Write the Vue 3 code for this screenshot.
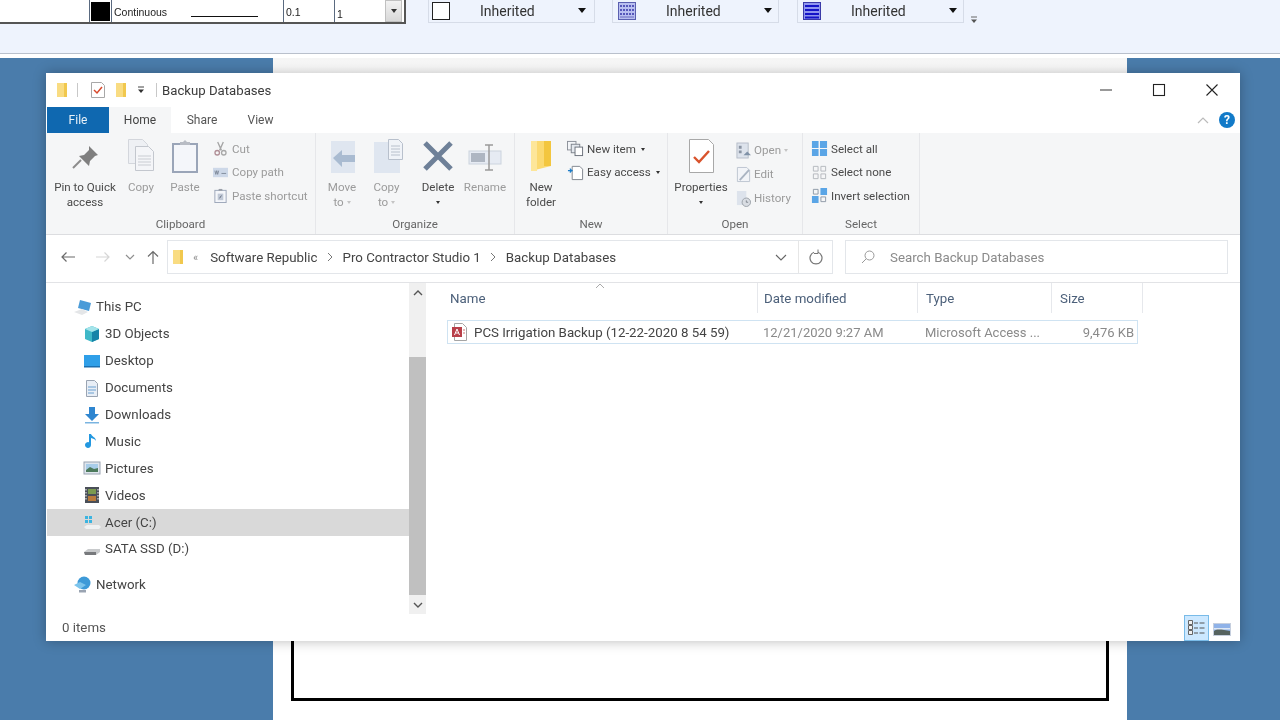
<template>
  <div class="screen">
    <header class="app-toolbar">
      <div class="line-combo">
        <div class="cell cell-blank"></div>
        <div class="cell cell-swatch"><span class="swatch"></span></div>
        <div class="cell cell-linetype"><span>Continuous</span><i class="line-sample"></i></div>
        <div class="cell cell-weight">0.1</div>
        <div class="cell cell-scale">
          <span>1</span>
          <button class="combo-drop"><i class="tri"></i></button>
        </div>
      </div>
      <div class="inherit-box first">
        <span class="inherit-blank"></span>
        <span class="inherit-label">Inherited</span>
        <i class="tri big"></i>
      </div>
      <div class="inherit-box">
        <svg class="inherit-icon" viewBox="0 0 18 18">
          <rect x=".5" y=".5" width="17" height="17" fill="#b9bff0" stroke="#5a5fb0" />
          <path d="M2 4h14M2 8h14M2 12h14" stroke="#3636a8" stroke-width="1.6" stroke-dasharray="2 1" />
          <path d="M2 15h14" stroke="#6a6ac0" />
        </svg>
        <span class="inherit-label">Inherited</span>
        <i class="tri big"></i>
      </div>
      <div class="inherit-box third">
        <svg class="inherit-icon" viewBox="0 0 18 18">
          <rect x=".5" y=".5" width="17" height="17" fill="#8f96ee" stroke="#3a3aa8" />
          <path d="M2 4h14M2 8h14M2 12h14M2 15.5h14" stroke="#1414c8" stroke-width="2" />
        </svg>
        <span class="inherit-label">Inherited</span>
        <i class="tri big"></i>
      </div>
      <svg class="toolbar-more" viewBox="0 0 8 8"><path d="M1 1h6" stroke="#666" /><path d="M1 3.5h6L4 7z" fill="#555" /></svg>
    </header>

    <main class="desktop">
      <div class="paper">
        <div class="drawing-frame"></div>
      </div>

      <section class="explorer">
        <div class="titlebar">
          <svg class="qa-folder" viewBox="0 0 10 14"><path d="M0 0h10v14H0z" fill="#f9dc82" /><path d="M7 0h3v14H7z" fill="#f1c84e" /></svg>
          <i class="qa-sep"></i>
          <svg class="qa-check" viewBox="0 0 14 16"><path d="M.5.5h10l3 3v12H.5z" fill="#fff" stroke="#a8a8a8" /><path d="M3 8l3 3 5-6" fill="none" stroke="#d8492c" stroke-width="1.5" /></svg>
          <svg class="qa-folder two" viewBox="0 0 10 14"><path d="M0 0h10v14H0z" fill="#f9dc82" /><path d="M7 0h3v14H7z" fill="#f1c84e" /></svg>
          <svg class="qa-more" viewBox="0 0 8 8"><path d="M1 1h6" stroke="#444" /><path d="M1 3.5h6L4 7z" fill="#333" /></svg>
          <i class="qa-sep last"></i>
          <span class="window-title">Backup Databases</span>
          <div class="window-buttons">
            <svg viewBox="0 0 14 14"><path d="M1 7h12" stroke="#555" stroke-width="1.2" /></svg>
            <svg viewBox="0 0 14 14"><rect x="1.5" y="1.5" width="11" height="11" fill="none" stroke="#222" stroke-width="1.1" /></svg>
            <svg viewBox="0 0 14 14"><path d="M1.5 1.5l11 11M12.5 1.5l-11 11" stroke="#222" stroke-width="1.1" /></svg>
          </div>
        </div>

        <div class="tabs">
          <span class="tab tab-file">File</span>
          <span class="tab tab-active">Home</span>
          <span class="tab tab-share">Share</span>
          <span class="tab tab-view">View</span>
          <svg class="collapse" viewBox="0 0 12 8"><path d="M1 7l5-5 5 5" fill="none" stroke="#bbb" stroke-width="1.2" /></svg>
          <span class="help">?</span>
        </div>

        <div class="ribbon">
          <div class="group" style="width: 270px">
            <div class="group-body clip-body">
              <div class="big-btn dark" style="width: 70px">
                <svg class="big-icon" viewBox="0 0 34 34"><path d="M21 7l9 9-3 1-5 5-1 5-10-10 5-1 5-5z" fill="#7f7f7f" /><path d="M13 21l-8 8" stroke="#8c8c8c" stroke-width="2" /></svg>
                <span>Pin to Quick<br />access</span>
              </div>
              <div class="big-btn faint" style="width: 42px">
                <svg class="big-icon" viewBox="0 0 34 34"><path d="M4.500 .5h14l5 5v19h-19z" fill="#eef0f4" stroke="#d3d6dc" /><path d="M11.500 7.500h13l5 5v19h-18z" fill="#f4f5f8" stroke="#c3c7ce" /><path d="M14 17h13M14 20h13M14 23h13M14 26h13" stroke="#c9ccd2" /></svg>
                <span>Copy</span>
              </div>
              <div class="big-btn faint" style="width: 46px">
                <svg class="big-icon" viewBox="0 0 34 34"><rect x="5" y="5" width="24" height="28" fill="#f4f6fa" stroke="#9aa5b8" stroke-width="2" /><path d="M12 6V3h3l2-2 2 2h3v3z" fill="#b8bcc4" /></svg>
                <span>Paste</span>
              </div>
              <div class="small-col" style="margin-left: 5px">
                <div class="small-row faint">
                  <svg viewBox="0 0 16 16"><path d="M5 1l4 9M11 1L7 10" stroke="#a5a5a5" stroke-width="1.4" /><circle cx="4.500" cy="12.500" r="2.400" fill="none" stroke="#b08f96" stroke-width="1.400" /><circle cx="11.500" cy="12.500" r="2.400" fill="none" stroke="#a8a8a8" stroke-width="1.400" /></svg>
                  <span>Cut</span>
                </div>
                <div class="small-row faint">
                  <svg viewBox="0 0 16 16"><rect x="0" y="3" width="16" height="10" fill="#cdd8e8" /><path d="M2 6l1 4 1-4 1 4 1-4M9 9h5" fill="none" stroke="#7f8a9a" /></svg>
                  <span>Copy path</span>
                </div>
                <div class="small-row faint">
                  <svg viewBox="0 0 16 16"><rect x="2" y="2.500" width="12" height="13" fill="#f4f6fa" stroke="#9aa5b8" /><path d="M6 3V1h4v2z" fill="#9a9fa8" /><rect x="5" y="6" width="6" height="7" fill="#c0c8d6" /><path d="M7 11l2-3" stroke="#5e6a7c" /></svg>
                  <span>Paste shortcut</span>
                </div>
              </div>
            </div>
            <div class="group-label">Clipboard</div>
          </div>

          <div class="group" style="width: 199px">
            <div class="group-body org-body">
              <div class="big-btn faint" style="width: 44px">
                <svg class="big-icon" viewBox="0 0 34 34"><rect x="6" y="2" width="24" height="32" fill="#dfe6f0" /><path d="M8 19l9-8v5h13v7H17v5z" fill="#a9bbd1" /></svg>
                <span>Move<br />to <i class="mini-tri"></i></span>
              </div>
              <div class="big-btn faint" style="width: 45px">
                <svg class="big-icon" viewBox="0 0 34 34"><rect x="4" y="3" width="26" height="31" fill="#dfe6f0" /><path d="M18.500 .5h10l4 4v16h-14z" fill="#f0f3f8" stroke="#b8c0cc" /><path d="M21 7h9M21 10h9M21 13h9M21 16h9" stroke="#b8c0cc" /></svg>
                <span>Copy<br />to <i class="mini-tri"></i></span>
              </div>
              <div class="big-btn dark" style="width: 58px">
                <svg class="big-icon" viewBox="0 0 34 34"><path d="M4 4l26 26M30 4L4 30" stroke="#6e8098" stroke-width="5" /></svg>
                <span>Delete<br /><i class="mini-tri solid"></i></span>
              </div>
              <div class="big-btn faint" style="width: 36px">
                <svg class="big-icon" viewBox="0 0 34 34"><rect x="1" y="12" width="32" height="13" fill="#e6ebf3" stroke="#ccd3de" /><rect x="3" y="14" width="14" height="9" fill="#aeb6c2" /><path d="M17 6h8M21 6v25M17 31h8" stroke="#9a9a9a" stroke-width="1.500" /></svg>
                <span>Rename</span>
              </div>
            </div>
            <div class="group-label">Organize</div>
          </div>

          <div class="group" style="width: 153px">
            <div class="group-body new-body">
              <div class="big-btn dark" style="width: 50px">
                <svg class="big-icon" viewBox="0 0 34 34"><path d="M7 2h20v25l-20 5z" fill="#fbd970" /><path d="M20 2h7v25h-7z" fill="#f3c63f" /><path d="M7 2h6v30H7z" fill="#fde69a" /></svg>
                <span>New<br />folder</span>
              </div>
              <div class="small-col new-col">
                <div class="small-row dark wide">
                  <svg viewBox="0 0 18 16"><rect x=".5" y=".5" width="9" height="9" fill="#f3f5f8" stroke="#8a8f98" /><rect x="4.500" y="3.500" width="9" height="9" fill="#e4e8ee" stroke="#7d838c" /><rect x="8.500" y="6.500" width="8" height="9" fill="#fff" stroke="#6a707a" /></svg>
                  <span>New item <i class="mini-tri solid up"></i></span>
                </div>
                <div class="small-row dark wide">
                  <svg viewBox="0 0 18 16"><path d="M5.500 1.500h8l3 3v11h-11z" fill="#fff" stroke="#7d838c" /><path d="M1 6h5M3 4l2 2-2 2" fill="none" stroke="#1b7cc8" stroke-width="1.200" /></svg>
                  <span>Easy access <i class="mini-tri solid up"></i></span>
                </div>
              </div>
            </div>
            <div class="group-label">New</div>
          </div>

          <div class="group" style="width: 135px">
            <div class="group-body open-body">
              <div class="big-btn dark" style="width: 58px">
                <svg class="big-icon" viewBox="0 0 34 34"><path d="M5.500 .5h19l5 5v28h-24z" fill="#fff" stroke="#a8a8a8" /><path d="M10 18l5 5 10-11" fill="none" stroke="#d9532c" stroke-width="2.400" /></svg>
                <span>Properties<br /><i class="mini-tri solid"></i></span>
              </div>
              <div class="small-col open-col">
                <div class="small-row faint">
                  <svg viewBox="0 0 16 18"><rect x="1" y="1" width="12" height="16" fill="#dde3ec" stroke="#b5bcc7" /><path d="M3 4h3v3H3zM3 9h3v3H3z" fill="#8a94a3" /><path d="M8 14l4-4 4 4" fill="#8092a8" /></svg>
                  <span>Open <i class="mini-tri"></i></span>
                </div>
                <div class="small-row faint">
                  <svg viewBox="0 0 16 18"><path d="M1.500 1.500h10l3 3v12h-13z" fill="#f2f4f8" stroke="#bcc4d0" /><path d="M4 15L14 4" stroke="#aab4c2" stroke-width="2" /></svg>
                  <span>Edit</span>
                </div>
                <div class="small-row faint">
                  <svg viewBox="0 0 16 18"><rect x="1" y="1" width="10" height="15" fill="#dde3ec" /><circle cx="11" cy="13" r="4.500" fill="#d9dde3" stroke="#9aa0a8" /><path d="M11 11v2h2" fill="none" stroke="#80868e" /></svg>
                  <span>History</span>
                </div>
              </div>
            </div>
            <div class="group-label">Open</div>
          </div>

          <div class="group" style="width: 117px">
            <div class="group-body select-body">
              <div class="small-col">
                <div class="small-row dark wide">
                  <svg viewBox="0 0 18 16"><path d="M1 0h7v7.500H1zM9.500 0h7.500v7.500H9.500zM1 8.500h7V16H1zM9.500 8.500h7.500V16H9.500z" fill="#5aa5e6" /></svg>
                  <span>Select all</span>
                </div>
                <div class="small-row dark wide">
                  <svg viewBox="0 0 18 16"><path d="M2.500 1.500h5v5h-5zM10.500 1.500h5v5h-5zM2.500 9.500h5v5h-5zM10.500 9.500h5v5h-5z" fill="none" stroke="#b5b8bd" /></svg>
                  <span>Select none</span>
                </div>
                <div class="small-row dark wide">
                  <svg viewBox="0 0 18 16"><path d="M10 0h7v7.500h-7zM1 8.500h7V16H1z" fill="#5aa5e6" /><path d="M2.500 1.500h5v5h-5zM10.500 9.500h5v5h-5z" fill="none" stroke="#8d98a6" /></svg>
                  <span>Invert selection</span>
                </div>
              </div>
            </div>
            <div class="group-label">Select</div>
          </div>
        </div>

        <div class="address-row">
          <svg class="nav-arrow" viewBox="0 0 16 12"><path d="M15 6H2M6.500 1.500L2 6l4.500 4.500" fill="none" stroke="#6b6b6b" stroke-width="1.200" /></svg>
          <svg class="nav-arrow fwd" viewBox="0 0 16 12"><path d="M1 6h13M9.500 1.500L14 6l-4.500 4.500" fill="none" stroke="#d6d6d6" stroke-width="1.200" /></svg>
          <svg class="nav-chev" viewBox="0 0 10 6"><path d="M1 1l4 4 4-4" fill="none" stroke="#8f8f8f" stroke-width="1.200" /></svg>
          <svg class="nav-up" viewBox="0 0 12 14"><path d="M6 14V1.500M1 6.500l5-5 5 5" fill="none" stroke="#6b6b6b" stroke-width="1.200" /></svg>
          <div class="address-box">
            <svg class="addr-folder" viewBox="0 0 10 14"><path d="M0 0h10v14H0z" fill="#f9dc82" /><path d="M7 0h3v14H7z" fill="#f1c84e" /></svg>
            <span class="crumb-overflow">«</span>
            <span class="crumb">Software Republic</span>
            <svg class="crumb-sep" viewBox="0 0 6 10"><path d="M1 1l4 4-4 4" fill="none" stroke="#777" /></svg>
            <span class="crumb">Pro Contractor Studio 1</span>
            <svg class="crumb-sep" viewBox="0 0 6 10"><path d="M1 1l4 4-4 4" fill="none" stroke="#777" /></svg>
            <span class="crumb">Backup Databases</span>
            <svg class="addr-chev" viewBox="0 0 12 7"><path d="M1 1l5 5 5-5" fill="none" stroke="#666" stroke-width="1.100" /></svg>
            <span class="addr-refresh">
              <svg viewBox="0 0 14 16"><path d="M5 3.300A6 6 0 1 0 9 3.300" fill="none" stroke="#777" stroke-width="1.200" /><path d="M9 .5V4.500H5" fill="none" stroke="#777" stroke-width="1" /></svg>
            </span>
          </div>
          <div class="search-box">
            <svg viewBox="0 0 14 14"><circle cx="8.500" cy="5.500" r="4.500" fill="none" stroke="#999" /><path d="M5.200 8.800L1 13" stroke="#999" /></svg>
            <span>Search Backup Databases</span>
          </div>
        </div>

        <div class="content">
          <nav class="nav-pane">
            <div class="tree">
              <div
                v-for="item in navItems"
                :key="item.label"
                class="tree-row"
                :class="[item.level === 0 ? 'root' : 'child', { selected: item.selected, network: item.label === 'Network' }]"
              >
                <svg viewBox="0 0 18 18" v-html="item.icon"></svg>
                <span>{{ item.label }}</span>
              </div>
            </div>
            <div class="scrollbar">
              <div class="scroll-btn"><svg viewBox="0 0 10 6"><path d="M1 5l4-4 4 4" fill="none" stroke="#555" stroke-width="1.400" /></svg></div>
              <div class="scroll-track"><div class="scroll-thumb"></div></div>
              <div class="scroll-btn"><svg viewBox="0 0 10 6"><path d="M1 1l4 4 4-4" fill="none" stroke="#555" stroke-width="1.400" /></svg></div>
            </div>
          </nav>

          <div class="file-pane">
            <svg class="sort-mark" viewBox="0 0 10 6"><path d="M1 5l4-4 4 4" fill="none" stroke="#aaa" /></svg>
            <div class="col-heads">
              <span style="width: 311px">Name</span>
              <span style="width: 160px">Date modified</span>
              <span style="width: 134px">Type</span>
              <span style="width: 91px">Size</span>
            </div>
            <div class="file-row">
              <span class="col-name" style="width: 315px">
                <svg viewBox="0 0 16 18"><path d="M2.500 .5h8l4 4v13h-12z" fill="#fff" stroke="#a5a5a5" /><rect x="0" y="4" width="10" height="10" fill="#b8404a" /><path d="M2.500 12l2.500-6 2.500 6M3.500 10h3" fill="none" stroke="#fff" /><path d="M11 7h2M11 10h2" stroke="#c77" /></svg>
                PCS Irrigation Backup (12-22-2020 8 54 59)
              </span>
              <span class="col-meta" style="width: 162px">12/21/2020 9:27 AM</span>
              <span class="col-meta" style="width: 134px">Microsoft Access ...</span>
              <span class="col-size">9,476 KB</span>
            </div>
          </div>
        </div>

        <footer class="statusbar">
          <span>0 items</span>
          <div class="view-buttons">
            <span class="view-btn active">
              <svg viewBox="0 0 18 16"><path d="M.5 .5h4v4h-4zM.5 5.500h4v4h-4zM.5 10.500h4v4h-4z" fill="#f0f0f0" stroke="#666" /><path d="M6 3h4M11.500 3h5M6 8h4M11.500 8h5M6 13h4M11.500 13h5" stroke="#555" /></svg>
            </span>
            <span class="view-btn">
              <svg viewBox="0 0 18 13"><rect width="18" height="13" fill="#c6cfde" /><rect x="1" y="1" width="16" height="11" fill="#8fb2e8" /><path d="M1 8l5-3 5 2 6 1v4H1z" fill="#56635f" /><path d="M1 5h16v1.500H1z" fill="#dfe8f4" /></svg>
            </span>
          </div>
        </footer>
      </section>
    </main>
  </div>
</template>

<script setup>
const navItems = [
  {
    label: 'This PC',
    level: 0,
    icon: '<path d="M6 2l11 3-2 8-11-3z" fill="#4a9bd8"/><path d="M0 14l8-3 6 3-6 3z" fill="#e4e6e8"/>'
  },
  {
    label: '3D Objects',
    level: 1,
    icon: '<path d="M9 1l7 3v10l-7 3-7-3V4z" fill="#3fb8c8"/><path d="M9 7l7-3v10l-7 3z" fill="#1783a8"/><path d="M2 4l7-3 7 3-7 3z" fill="#a4e4ea"/>'
  },
  {
    label: 'Desktop',
    level: 1,
    icon: '<rect x="1" y="3" width="16" height="11" fill="#2f9fe8"/><rect x="1" y="14" width="16" height="1.500" fill="#1a6fb0"/>'
  },
  {
    label: 'Documents',
    level: 1,
    icon: '<path d="M3.500 1.500h8l3 3v13h-11z" fill="#e8eef6" stroke="#9aa4b2"/><path d="M5 8h8M5 11h8M5 14h6" stroke="#6aa0d0"/>'
  },
  {
    label: 'Downloads',
    level: 1,
    icon: '<path d="M6 1h6v7h4l-7 7-7-7h4z" fill="#2f86d0"/><path d="M2 16h14v1.500H2z" fill="#7ab4e0"/>'
  },
  {
    label: 'Music',
    level: 1,
    icon: '<path d="M8 2v11a3 3 0 1 1-2-2.800V2zM8 2c1 3 5 3 5 7-1-2-3-2.500-5-3z" fill="#2398e0"/>'
  },
  {
    label: 'Pictures',
    level: 1,
    icon: '<rect x="1" y="3" width="16" height="12" fill="#dfe6ee" stroke="#9aa4b2"/><rect x="3" y="5" width="12" height="8" fill="#a8cdea"/><path d="M3 11l4-3 4 2 4-1v4H3z" fill="#4c7a5c"/>'
  },
  {
    label: 'Videos',
    level: 1,
    icon: '<rect x="2" y="1" width="14" height="16" fill="#4a4f58"/><rect x="5" y="3" width="8" height="5" fill="#7a9a50"/><rect x="5" y="10" width="8" height="5" fill="#b87a3c"/><path d="M3 3v12M15 3v12" stroke="#ddd" stroke-width="1.200" stroke-dasharray="1.500 1.500"/>'
  },
  {
    label: 'Acer (C:)',
    level: 1,
    selected: true,
    icon: '<path d="M2 3h3v3H2zM6 3h3v3H6zM2 7h3v3H2zM6 7h3v3H6z" fill="#3cb4e0"/><path d="M1 14l3-2h12l2 2-2 2H3z" fill="#f0f1f2"/>',
  },
  {
    label: 'SATA SSD (D:)',
    level: 1,
    icon: '<path d="M1 12l4-3h12v3l-4 3H2z" fill="#c8cacc"/><path d="M1 12h12v3H2z" fill="#77797c"/>'
  },
  {
    label: 'Network',
    level: 0,
    icon: '<circle cx="10" cy="7" r="6.500" fill="#3d9ad8"/><path d="M0 9l6-3 6 3-6 4z" fill="#7cc4ec"/><path d="M5 14h7v2.500H5z" fill="#9aa4b2"/>'
  }
]
</script>

<style>
html,
body {
  margin: 0;
  background: #fff;
}
</style>

<style scoped>
.screen {
  position: relative;
  width: 1280px;
  height: 720px;
  overflow: hidden;
  display: flex;
  flex-direction: column;
  font-family: 'Roboto', 'Open Sans', sans-serif;
  background: #fff;
  filter: blur(0.35px);
}

/* host app toolbar behind the dialog */
.app-toolbar {
  height: 53px;
  flex: none;
  display: flex;
  align-items: flex-start;
  background: #eef3fd;
  border-bottom: 1px solid #b9c0cc;
}

.line-combo {
  width: 404px;
  height: 22px;
  flex: none;
  display: flex;
  background: #fff;
  border-right: 2px solid #555;
  border-bottom: 2px solid #555;
  font-family: 'Liberation Sans', sans-serif;
  font-size: 10.500px;
  color: #222;
}

.cell {
  height: 100%;
  box-sizing: border-box;
  border-right: 1px solid #5a6a80;
  display: flex;
  align-items: center;
  padding-top: 2px;
}

.cell-blank { width: 90px; }
.cell-swatch { width: 22px; padding: 0 0 0 1px; }
.swatch { width: 19px; height: 19px; background: #000; }
.cell-linetype { width: 172px; padding-left: 2px; position: relative; }
.line-sample { width: 67px; height: 1px; background: #111; margin: 8px 0 0 24px; }
.cell-weight { width: 51px; padding-left: 2px; }
.cell-scale { flex: 1; border-right: 0; padding: 0 0 0 2px; justify-content: space-between; }
.cell-scale span { padding-top: 5px; }

.combo-drop {
  width: 17px;
  height: 22px;
  margin-right: 2px;
  padding: 0;
  border: 1px solid #c0c0c0;
  background: linear-gradient(#f2f2f2, #d8d8d8);
  display: flex;
  align-items: center;
  justify-content: center;
}

.tri {
  display: block;
  width: 0;
  height: 0;
  border-left: 3px solid transparent;
  border-right: 3px solid transparent;
  border-top: 4px solid #333;
}

.tri.big {
  border-left-width: 4px;
  border-right-width: 4px;
  border-top: 5px solid #111;
  margin-left: 45px;
}

.inherit-box {
  width: 167px;
  height: 23px;
  box-sizing: border-box;
  margin-left: 17px;
  padding: 0 8px 1px 5px;
  flex: none;
  display: flex;
  align-items: center;
  border: 1px solid #d6dce8;
  border-top: 0;
  font-size: 14px;
  color: #333;
}

.inherit-box.first { margin-left: 22px; padding-left: 3px; }
.inherit-box.third { margin-left: 18px; }
.inherit-blank { width: 18px; height: 18px; box-sizing: border-box; background: #fff; border: 1px solid #222; flex: none; }
.inherit-icon { width: 18px; height: 18px; flex: none; }
.inherit-label { margin-left: 30px; width: 53px; white-space: nowrap; }
.toolbar-more { width: 8px; height: 8px; margin: 16px 0 0 6px; flex: none; }

.desktop {
  flex: 1;
  position: relative;
  margin-top: 4px;
  margin-bottom: 2px;
  background: #4a7cab;
}

.paper {
  width: 854px;
  height: 662px;
  margin-left: 273px;
  box-sizing: border-box;
  padding: 0 18px;
  background: linear-gradient(#f5f5f5, #fff 15px);
  display: flex;
  flex-direction: column;
  justify-content: flex-end;
}

.drawing-frame {
  height: 600px;
  margin-bottom: 19px;
  border: 3px solid #000;
}

/* explorer window */
.explorer {
  position: absolute;
  left: 46px;
  top: 15px;
  width: 1194px;
  height: 568px;
  display: flex;
  flex-direction: column;
  background: #fff;
  box-shadow: 0 0 12px rgba(0, 0, 0, 0.28);
  color: #444;
}

.titlebar {
  height: 34px;
  flex: none;
  display: flex;
  align-items: center;
  padding-left: 11px;
}

.qa-folder { width: 10px; height: 14px; flex: none; }
.qa-folder.two { margin-left: 11px; }
.qa-sep { width: 1px; height: 14px; margin-left: 10px; background: #c8c8c8; }
.qa-sep.last { margin-left: 11px; }
.qa-check { width: 14px; height: 16px; margin-left: 13px; flex: none; }
.qa-more { width: 8px; height: 8px; margin-left: 11px; flex: none; }

.window-title {
  margin-left: 5px;
  font-size: 13.200px;
  color: #3b3b3b;
}

.window-buttons {
  margin-left: auto;
  margin-right: 21px;
  display: flex;
  gap: 39px;
}

.window-buttons svg { width: 14px; height: 14px; }

.tabs {
  height: 26px;
  flex: none;
  position: relative;
  display: flex;
  font-size: 12px;
  color: #555;
  padding-left: 1px;
}

.tab {
  width: 62px;
  display: flex;
  align-items: center;
  justify-content: center;
}

.tab-file { background: #0f68b0; color: #e8f1f8; }
.tab-active { background: #f5f6f7; color: #444; }
.tab-share { width: 62px; }
.tab-view { width: 55px; }

.collapse {
  width: 12px;
  height: 8px;
  margin: 9px 0 0 auto;
}

.help {
  width: 16px;
  height: 16px;
  margin: 5px 5px 0 10px;
  border-radius: 50%;
  background: #127ac8;
  color: #fff;
  font-size: 12px;
  font-weight: 700;
  text-align: center;
  line-height: 16px;
}

.ribbon {
  height: 102px;
  flex: none;
  box-sizing: border-box;
  display: flex;
  background: #f5f6f7;
  border-bottom: 1px solid #dcdde0;
}

.group {
  box-sizing: border-box;
  flex: none;
  display: flex;
  flex-direction: column;
  border-right: 1px solid #e6e7ea;
}

.group-body {
  height: 83px;
  display: flex;
  align-items: flex-start;
  box-sizing: border-box;
  padding-top: 6px;
}

.clip-body { padding-left: 4px; }
.org-body { padding-left: 4px; }
.new-body { padding-left: 1px; }
.open-body { padding-left: 4px; }
.select-body { padding-left: 8px; }

.group-label {
  text-align: center;
  font-size: 11.600px;
  line-height: 16px;
  color: #666;
}

.big-btn {
  flex: none;
  display: flex;
  flex-direction: column;
  align-items: center;
  text-align: center;
  font-size: 11.600px;
  line-height: 15px;
  white-space: nowrap;
}

.big-icon {
  width: 34px;
  height: 34px;
  margin-bottom: 7px;
}

.dark { color: #4a4a4a; }
.faint { color: #9b9b9b; }

.small-col {
  display: flex;
  flex-direction: column;
  margin-top: -2px;
}

.new-col { margin-left: 1px; }
.open-col { margin-left: 6px; padding-top: 1px; }

.small-row {
  height: 23.500px;
  display: flex;
  align-items: center;
  gap: 4px;
  font-size: 11.600px;
  white-space: nowrap;
}

.open-col .small-row { height: 24px; gap: 3px; }

.small-row svg {
  width: 15px;
  height: 17px;
  flex: none;
}

.small-row.wide { gap: 3px; }
.small-row.wide svg { width: 17px; }

.mini-tri {
  display: inline-block;
  width: 0;
  height: 0;
  vertical-align: middle;
  border-left: 2.500px solid transparent;
  border-right: 2.500px solid transparent;
  border-top: 3px solid #c4c4c4;
}

.mini-tri.solid { border-top-color: #333; }
.mini-tri.up { margin-left: 2px; vertical-align: 2px; }

.address-row {
  height: 48px;
  flex: none;
  box-sizing: border-box;
  display: flex;
  align-items: center;
  padding: 0 12px 3px 14px;
  border-bottom: 1px solid #e2e3e6;
}

.nav-arrow { width: 16px; height: 12px; flex: none; }
.nav-arrow.fwd { margin-left: 19px; }
.nav-chev { width: 10px; height: 6px; margin-left: 14px; flex: none; }
.nav-up { width: 12px; height: 14px; margin-left: 12px; flex: none; }

.address-box,
.search-box {
  height: 34px;
  box-sizing: border-box;
  display: flex;
  align-items: center;
  border: 1px solid #e3e6ea;
  font-size: 13.300px;
}

.address-box {
  width: 666px;
  margin-left: 8px;
  padding-left: 5px;
  flex: none;
  color: #444;
}

.addr-folder { width: 10px; height: 14px; flex: none; }
.crumb-overflow { margin-left: 10px; color: #888; font-size: 11px; }
.crumb { margin-left: 12px; white-space: nowrap; }
.crumb-sep { width: 6px; height: 10px; margin-left: 9px; flex: none; }
.crumb-sep + .crumb { margin-left: 10px; }
.addr-chev { width: 12px; height: 7px; margin-left: auto; flex: none; }

.addr-refresh {
  width: 34px;
  height: 100%;
  margin-left: 11px;
  box-sizing: border-box;
  border-left: 1px solid #e6e6e6;
  display: flex;
  align-items: center;
  justify-content: center;
  flex: none;
}

.addr-refresh svg { width: 14px; height: 16px; }

.search-box {
  width: 383px;
  margin-left: 12px;
  padding-left: 15px;
  flex: none;
  color: #8a8a8a;
}

.search-box svg { width: 14px; height: 14px; margin-right: 15px; flex: none; }

.content {
  flex: 1;
  min-height: 0;
  display: flex;
}

.nav-pane {
  width: 380px;
  flex: none;
  display: flex;
  padding-bottom: 3px;
}

.tree {
  width: 362px;
  flex: none;
  margin-left: 1px;
  padding-top: 10.500px;
  box-sizing: border-box;
}

.tree-row {
  height: 26.900px;
  display: flex;
  align-items: center;
  gap: 4px;
  font-size: 13.300px;
  color: #444;
}

.tree-row svg { width: 18px; height: 18px; flex: none; }
.tree-row.root { padding-left: 27px; }
.tree-row.child { padding-left: 36px; }
.tree-row.selected { background: #d9d9d9; }
.tree-row.network { margin-top: 9px; }

.scrollbar {
  width: 17px;
  flex: none;
  display: flex;
  flex-direction: column;
  background: #f0f0f0;
}

.scroll-btn {
  height: 19px;
  flex: none;
  display: flex;
  align-items: center;
  justify-content: center;
}

.scroll-btn svg { width: 10px; height: 6px; }

.scroll-track {
  flex: 1;
  display: flex;
  flex-direction: column;
  justify-content: flex-end;
}

.scroll-thumb {
  height: 238px;
  background: #c0c0c0;
}

.file-pane {
  position: relative;
  flex: 1;
  padding-left: 21px;
  font-size: 13.300px;
}

.sort-mark {
  position: absolute;
  left: 169px;
  top: 0;
  width: 10px;
  height: 6px;
}

.col-heads {
  height: 30px;
  display: flex;
  align-items: center;
  color: #4c607a;
}

.col-heads span {
  box-sizing: border-box;
  height: 100%;
  display: flex;
  align-items: center;
  border-right: 1px solid #e6e8ec;
  padding-left: 3px;
}

.col-heads span + span { padding-left: 6px; }
.col-heads span:nth-child(3),
.col-heads span:nth-child(4) { padding-left: 8px; }

.file-row {
  width: 691px;
  height: 24px;
  box-sizing: border-box;
  margin-top: 7px;
  display: flex;
  align-items: center;
  border: 1px solid #cfe3f2;
  color: #8a8a8a;
  white-space: nowrap;
}

.col-name {
  display: flex;
  align-items: center;
  gap: 6px;
  padding-left: 4px;
  box-sizing: border-box;
  color: #444;
}

.col-name svg { width: 16px; height: 18px; flex: none; }
.col-meta { font-size: 13px; }
.col-size { margin-left: auto; padding-right: 3px; font-size: 13px; }

.statusbar {
  height: 24px;
  flex: none;
  display: flex;
  align-items: center;
  padding: 0 0 4px 16px;
  box-sizing: border-box;
  font-size: 13.300px;
  color: #555;
}

.view-buttons {
  margin-left: auto;
  margin-right: 9px;
  margin-top: 4px;
  display: flex;
  align-items: center;
  gap: 4px;
}

.view-btn {
  display: flex;
  align-items: center;
  justify-content: center;
}

.view-btn svg { width: 18px; height: 13px; }

.view-btn.active {
  width: 25px;
  height: 26px;
  box-sizing: border-box;
  margin-top: -2px;
  background: #cce8ff;
  border: 1px solid #79bbe8;
}

.view-btn.active svg { height: 16px; }
</style>
